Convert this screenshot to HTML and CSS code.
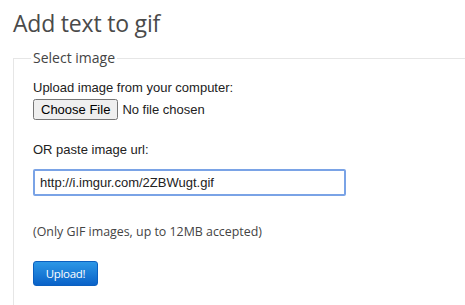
FILE: index.html
```html
<!DOCTYPE html>
<html lang="en">
  <head>
    <meta charset="UTF-8" />
    <title>Add text to gif</title>
    <link rel="stylesheet" href="styles.css">
  </head>
  <body>
    <div class="page">
      <h1>Add text to gif</h1>

      <form class="upload-form">
        <fieldset>
          <legend>Select image</legend>

          <label class="field-label" for="fileInput">Upload image from your computer:</label>
          <input type="file" id="fileInput" class="file-input" />

          <label class="field-label url-label" for="urlInput">OR paste image url:</label>
          <input type="text" id="urlInput" class="url-input" value="http://i.imgur.com/2ZBWugt.gif" />

          <p class="note">(Only GIF images, up to 12MB accepted)</p>

          <button type="button" class="upload-btn">Upload!</button>
        </fieldset>
      </form>
    </div>
  </body>
</html>
```

FILE: styles.css
```css
body {
  margin: 0;
  background-color: #ffffff;
  font-family: "Open Sans", "DejaVu Sans", sans-serif;
  color: #444;
  overflow: hidden;
}
.page {
  padding: 0 0 0 13px;
}
h1 {
  margin: 0;
  padding-top: 8px;
  font-size: 23px;
  font-weight: normal;
  line-height: 30px;
  color: #4a4a4a;
  letter-spacing: -0.2px;
}
fieldset {
  margin: 12px -20px 0 0;
  padding: 14px 0 20px 19px;
  border: 1px solid #e6e6e6;
  border-right: none;
}
legend {
  font-size: 14px;
  padding: 0 2px;
  margin-left: -2px;
  color: #444;
  line-height: 16px;
}
.field-label {
  display: block;
  font-family: "Liberation Sans", Arial, sans-serif;
  font-size: 13px;
  color: #222;
  line-height: 16px;
}
.file-input {
  display: block;
  margin: 3px 0 0;
  font-family: "Liberation Sans", Arial, sans-serif;
  font-size: 13px;
  color: #222;
}
.url-label {
  margin-top: 22px;
}
.url-input {
  display: block;
  box-sizing: border-box;
  width: 313px;
  height: 27px;
  margin-top: 11px;
  padding: 0 5px;
  border: 2px solid #7aa3e6;
  border-radius: 2px;
  font-family: "Liberation Sans", Arial, sans-serif;
  font-size: 13px;
  color: #222;
  outline: none;
}
.note {
  margin: 27px 0 0;
  font-size: 12.4px;
  line-height: 18px;
  color: #444;
}
.upload-btn {
  display: block;
  margin-top: 20px;
  width: 65px;
  height: 25px;
  padding: 0;
  border: 1px solid #0b5fbf;
  border-radius: 3px;
  background: linear-gradient(#2c97e6, #0a62c8);
  color: #ffffff;
  font-family: "Open Sans", "DejaVu Sans", sans-serif;
  font-size: 11.5px;
  letter-spacing: -0.3px;
  cursor: pointer;
}
```
